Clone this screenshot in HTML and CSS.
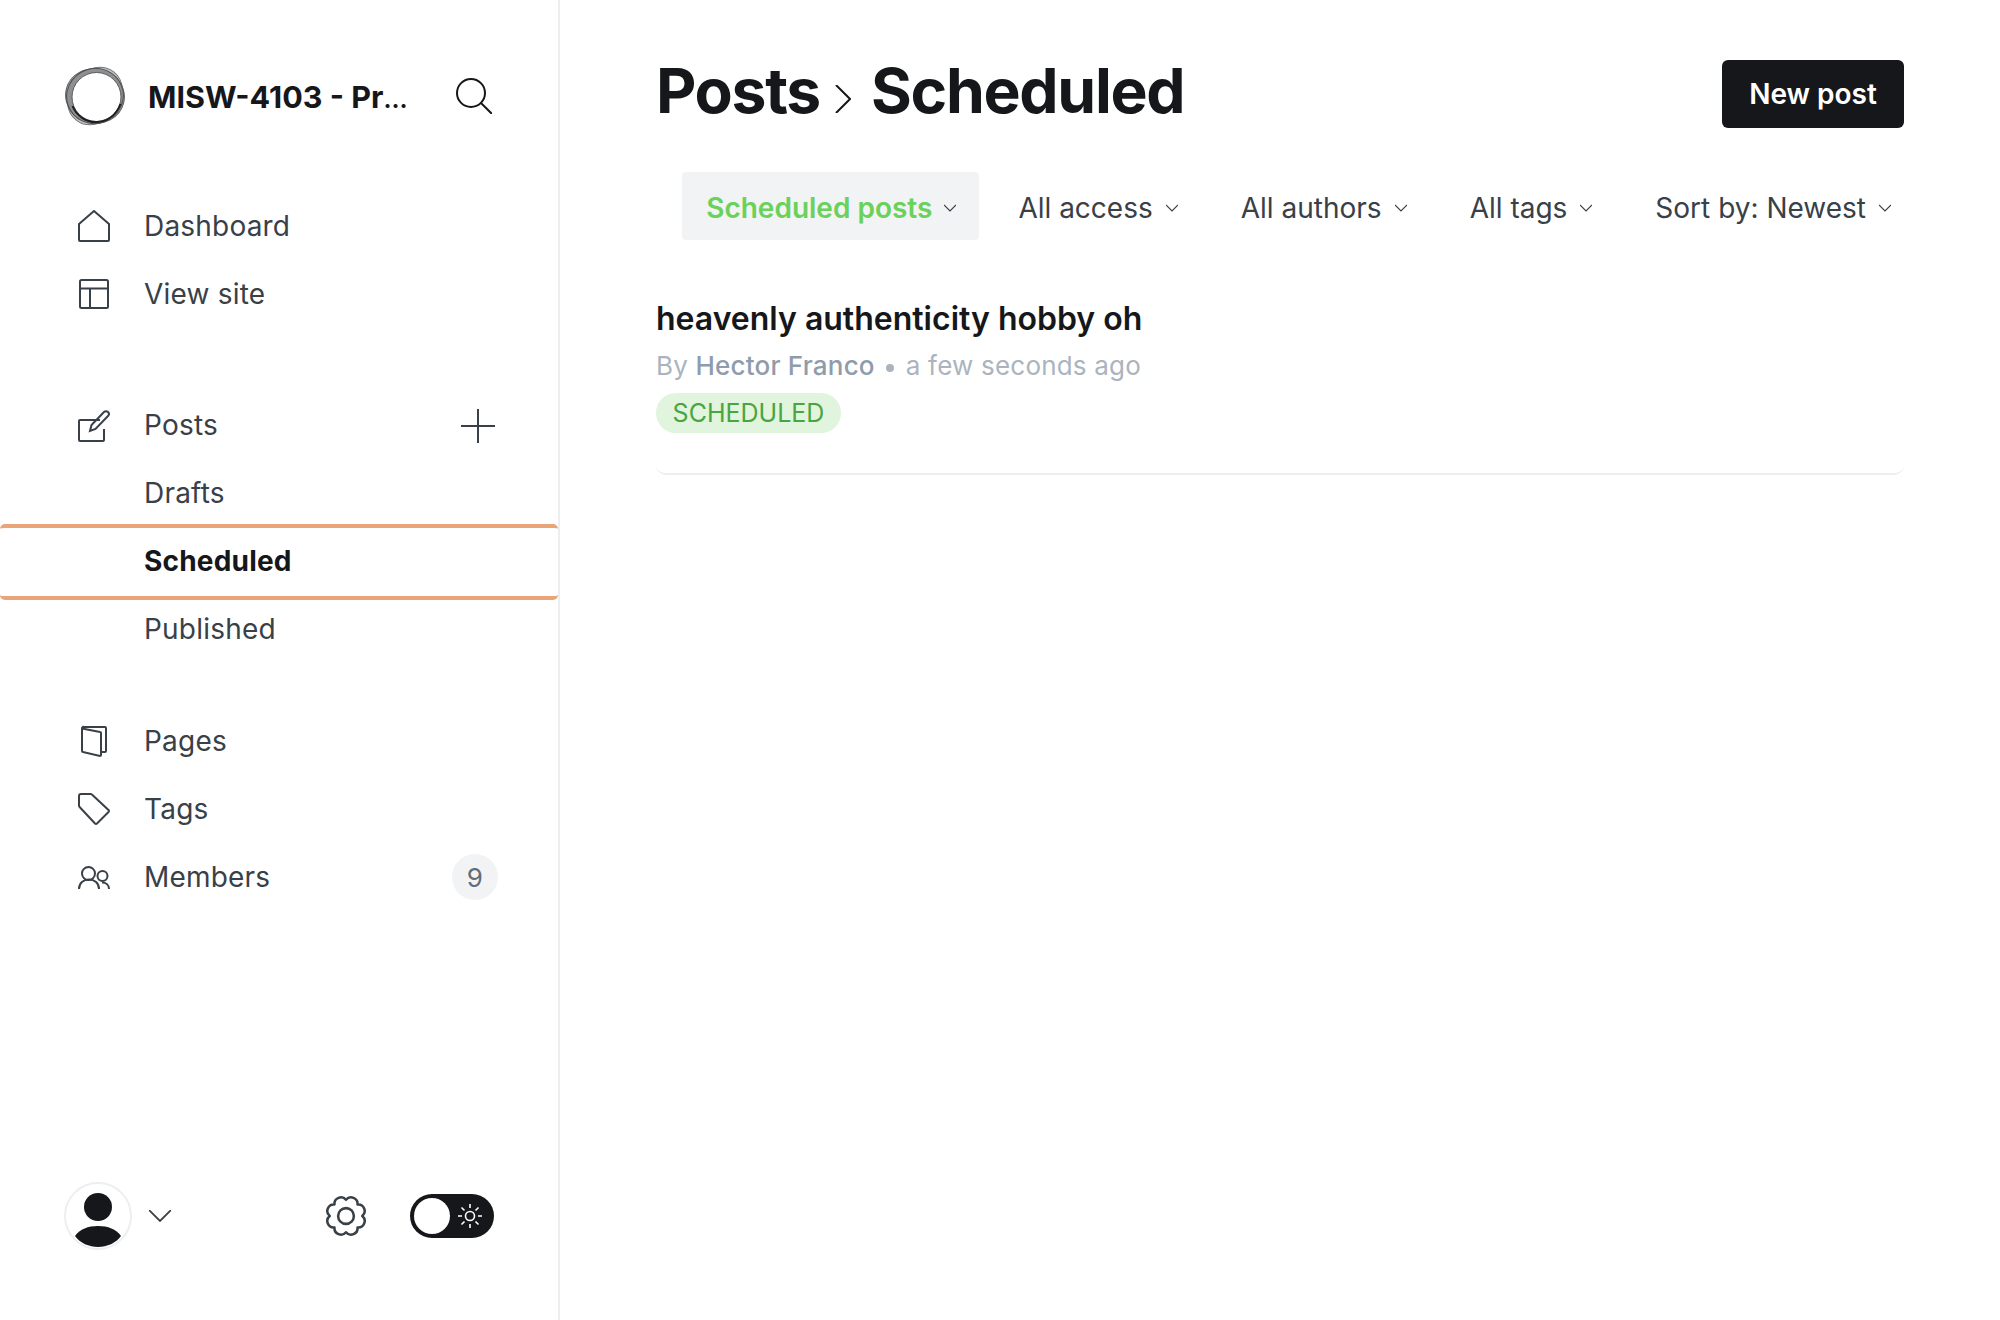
FILE: index.html
```html
<!DOCTYPE html>
<html lang="en">
<head>
    <meta charset="UTF-8">
    <meta name="viewport" content="width=device-width, initial-scale=1.0">
    <title>Posts - Scheduled</title>
    <link rel="stylesheet" href="styles.css">
</head>
<body>
    <aside class="sidebar">
        <div class="site-head">
            <svg class="site-logo" viewBox="0 0 62 62">
                <ellipse cx="31" cy="31" rx="30.500" ry="25.500" transform="rotate(-52 31 31)" fill="#c4c4c4" stroke="#77787a" stroke-width="1"/>
                <ellipse cx="31" cy="31" rx="29.500" ry="27" transform="rotate(14 31 31)" fill="#aaabac" stroke="#5d5e60" stroke-width="1"/>
                <ellipse cx="31" cy="31" rx="28.500" ry="27.500" transform="rotate(-20 31 31)" fill="#8e8f91" stroke="#4d4e50" stroke-width="1"/>
                <circle cx="32.500" cy="32" r="24.500" fill="#ffffff" stroke="#5a5b5d" stroke-width="1"/>
                <path d="M8.500 41c4 10 14 17 25 16 11-1 19-8 23-18" fill="none" stroke="#1d1e20" stroke-width="2"/>
            </svg>
            <span class="site-name">MISW-4103 - Pr<span class="site-dots">…</span></span>
            <svg class="search-icon" viewBox="0 0 36 36" fill="none" stroke="#15171a" stroke-width="2">
                <circle cx="15" cy="15" r="14"/>
                <path d="M25 25l11 11"/>
            </svg>
        </div>

        <nav class="nav-group nav-top">
            <a class="nav-item">
                <svg class="nav-icon" viewBox="0 0 32 32"><path d="M1 14L16 1l15 13v16a1 1 0 0 1-1 1H2a1 1 0 0 1-1-1z"/></svg>
                Dashboard
            </a>
            <a class="nav-item">
                <svg class="nav-icon" viewBox="0 0 32 32"><rect x="2" y="2" width="28" height="28" rx="1.500"/><path d="M2 10.500h28M12 10.500V30"/></svg>
                View site
            </a>
        </nav>

        <nav class="nav-group nav-posts">
            <a class="nav-item">
                <svg class="nav-icon" viewBox="0 0 32 32"><path d="M22 10H2a1 1 0 0 0-1 1v19a1 1 0 0 0 1 1h23a1 1 0 0 0 1-1V19"/><path d="M12 21l1.500-6L26 2a2.800 2.800 0 0 1 4 4L17.500 19z"/></svg>
                Posts
                <svg class="plus-icon" viewBox="0 0 34 34"><path d="M17 0v34M0 17h34"/></svg>
            </a>
            <a class="nav-item">Drafts</a>
            <a class="nav-item nav-current">Scheduled</a>
            <a class="nav-item">Published</a>
        </nav>

        <nav class="nav-group nav-pages">
            <a class="nav-item">
                <svg class="nav-icon" viewBox="0 0 32 32"><path d="M5 4a1 1 0 0 1 1-2h21a1 1 0 0 1 1 1v23a1 1 0 0 1-1 1h-4"/><path d="M4 3.500l18 3.500a1 1 0 0 1 1 1v22a1 1 0 0 1-1 1L5 27a1 1 0 0 1-1-1z"/></svg>
                Pages
            </a>
            <a class="nav-item">
                <svg class="nav-icon" viewBox="0 0 32 32"><path d="M1 3a2 2 0 0 1 2-2h9.500a2 2 0 0 1 1.400.6L30.500 17a1.500 1.500 0 0 1 0 2L19 30.500a1.500 1.500 0 0 1-2 0L1.600 14a2 2 0 0 1-.6-1.400z"/></svg>
                Tags
            </a>
            <a class="nav-item">
                <svg class="nav-icon" viewBox="0 0 32 32"><circle cx="10.500" cy="12.500" r="6.500"/><path d="M1 28c0-6 4.500-9.500 10-9.500s10 3.500 10 9.500"/><circle cx="24.500" cy="15" r="5"/><path d="M24 21.500c4 0 7 2.500 7 6.500"/></svg>
                Members
                <span class="count">9</span>
            </a>
        </nav>

        <div class="side-foot">
            <div class="avatar">
                <svg viewBox="0 0 64 64">
                    <circle cx="32" cy="23" r="14"/>
                    <path d="M9 52c5-7 13-10 23-10s18 3 23 10c-5 7-14 11-23 11S14 59 9 52z"/>
                </svg>
            </div>
            <svg class="avatar-caret" viewBox="0 0 22 12"><path d="M0 0l11 11L22 0"/></svg>
            <svg class="gear-icon" viewBox="0 0 40 40">
                <circle cx="20" cy="20" r="7.500"/>
                <path d="M20 4.500A6.200 6.200 0 0 1 30.960 9.040A6.200 6.200 0 0 1 35.500 20A6.200 6.200 0 0 1 30.960 30.960A6.200 6.200 0 0 1 20 35.500A6.200 6.200 0 0 1 9.040 30.960A6.200 6.200 0 0 1 4.500 20A6.200 6.200 0 0 1 9.040 9.040A6.200 6.200 0 0 1 20 4.500z"/>
            </svg>
            <div class="theme-toggle">
                <span class="knob"></span>
                <svg class="sun-icon" viewBox="0 0 24 24">
                    <circle cx="12" cy="12" r="4.500"/>
                    <path d="M12 0v4M12 20v4M0 12h4M20 12h4M3.500 3.500l3 3M17.500 17.500l3 3M3.500 20.500l3-3M17.500 6.500l3-3"/>
                </svg>
            </div>
        </div>
    </aside>

    <main class="content">
        <header class="page-head">
            <h2 class="page-title">
                Posts
                <svg class="crumb" viewBox="0 0 16 28"><path d="M1 0l14 14L1 28"/></svg>
                Scheduled
            </h2>
            <button class="new-post" type="button">New post</button>
        </header>

        <div class="filters">
            <div class="filter filter-active">Scheduled posts <svg class="caret" viewBox="0 0 12 8"><path d="M0 1l6 6 6-6"/></svg></div>
            <div class="filter">All access <svg class="caret" viewBox="0 0 12 8"><path d="M0 1l6 6 6-6"/></svg></div>
            <div class="filter">All authors <svg class="caret" viewBox="0 0 12 8"><path d="M0 1l6 6 6-6"/></svg></div>
            <div class="filter">All tags <svg class="caret" viewBox="0 0 12 8"><path d="M0 1l6 6 6-6"/></svg></div>
            <div class="filter">Sort by: Newest <svg class="caret" viewBox="0 0 12 8"><path d="M0 1l6 6 6-6"/></svg></div>
        </div>

        <article class="post-row">
            <h3 class="post-title">heavenly authenticity hobby oh</h3>
            <p class="post-meta">By <span class="post-author">Hector Franco</span> <span class="post-dot"></span> a few seconds ago</p>
            <span class="post-status">SCHEDULED</span>
        </article>
    </main>
</body>
</html>
```

FILE: styles.css
```css
* {
    box-sizing: border-box;
}

body {
    margin: 0;
    height: 100vh;
    display: flex;
    background-color: #ffffff;
    font-family: Inter, 'Noto Sans', sans-serif;
    color: #15171a;
    overflow: hidden;
}

svg {
    display: block;
    flex: none;
}

.sidebar {
    width: 560px;
    height: 100%;
    flex: none;
    display: flex;
    flex-direction: column;
    border-right: 2px solid #eceef0;
}

.site-head {
    display: flex;
    align-items: center;
    height: 64px;
    margin-top: 64px;
    padding-left: 64px;
}

.site-logo {
    width: 62px;
    height: 62px;
}

.site-name {
    margin-left: 22px;
    width: 308px;
    font-size: 30.500px;
    font-weight: 700;
    white-space: nowrap;
}

.site-dots {
    font-size: 24px;
}

.search-icon {
    width: 36px;
    height: 36px;
}

.nav-top {
    margin-top: 64px;
}

.nav-posts {
    margin-top: 64px;
}

.nav-pages {
    margin-top: 43px;
}

.nav-item {
    display: flex;
    align-items: center;
    height: 68px;
    padding-left: 144px;
    position: relative;
    font-size: 28px;
    color: #394047;
    letter-spacing: 0.2px;
}

.nav-posts .nav-item {
    padding-bottom: 2px;
}

.nav-icon {
    position: absolute;
    left: 78px;
    top: 18px;
    width: 32px;
    height: 32px;
    fill: none;
    stroke: #394047;
    stroke-width: 2;
}

.nav-current {
    height: 76px;
    margin: -4px 0;
    border-top: 4px solid #e9a578;
    border-bottom: 4px solid #e9a578;
    border-radius: 5px;
    font-weight: 700;
    color: #15171a;
    letter-spacing: 0.2px;
}

.plus-icon {
    position: absolute;
    left: 461px;
    top: 17px;
    width: 34px;
    height: 34px;
    fill: none;
    stroke: #394047;
    stroke-width: 2;
}

.count {
    position: absolute;
    left: 452px;
    top: 11px;
    width: 46px;
    height: 46px;
    border-radius: 50%;
    background-color: #f1f3f4;
    display: flex;
    align-items: center;
    justify-content: center;
    font-size: 26px;
    color: #626d79;
}

.side-foot {
    margin-top: auto;
    margin-bottom: 70px;
    padding-left: 64px;
    display: flex;
    align-items: center;
    height: 68px;
}

.avatar {
    width: 68px;
    height: 68px;
    border: 2px solid #eceef0;
    border-radius: 50%;
    overflow: hidden;
}

.avatar svg {
    width: 64px;
    height: 64px;
    fill: #15171a;
}

.avatar-caret {
    margin-left: 17px;
    width: 22px;
    height: 12px;
    fill: none;
    stroke: #394047;
    stroke-width: 1.8;
}

.gear-icon {
    margin-left: 154px;
    width: 42px;
    height: 42px;
    fill: none;
    stroke: #394047;
    stroke-width: 2.4;
    stroke-linejoin: round;
}

.theme-toggle {
    margin-left: 43px;
    width: 84px;
    height: 44px;
    border-radius: 22px;
    background-color: #15171a;
    display: flex;
    align-items: center;
    padding-left: 4px;
}

.knob {
    width: 36px;
    height: 36px;
    border-radius: 50%;
    background-color: #ffffff;
}

.sun-icon {
    margin-left: 8px;
    width: 24px;
    height: 24px;
    fill: none;
    stroke: #ffffff;
    stroke-width: 1.6;
}

.content {
    flex: 1;
    min-width: 0;
    padding: 60px 96px 0;
}

.page-head {
    display: flex;
    align-items: center;
    justify-content: space-between;
    height: 68px;
}

.page-title {
    margin: 0;
    padding-bottom: 8px;
    display: flex;
    align-items: center;
    font-size: 62.400px;
    font-weight: 700;
    letter-spacing: -1.3px;
    color: #15171a;
}

.crumb {
    width: 16px;
    height: 28px;
    margin: 18px 20px 0 15px;
    fill: none;
    stroke: #15171a;
    stroke-width: 2;
}

.new-post {
    width: 182px;
    height: 68px;
    border: none;
    border-radius: 6px;
    background-color: #15171a;
    color: #ffffff;
    font-family: inherit;
    font-size: 28px;
    font-weight: 600;
    cursor: pointer;
}

.filters {
    display: flex;
    justify-content: flex-end;
    margin-top: 44px;
    height: 68px;
}

.filter {
    display: flex;
    align-items: center;
    gap: 13px;
    padding: 3px 13px 0 16px;
    margin-left: 34px;
    font-size: 28px;
    color: #394047;
    white-space: nowrap;
}

.filter-active {
    gap: 12px;
    margin-left: 0;
    padding: 3px 23px 0 24px;
    border-radius: 4px;
    background-color: #f1f3f4;
    color: #6ad15b;
    font-weight: 600;
}

.filter-active + .filter {
    margin-left: 23px;
}

.caret {
    width: 12px;
    height: 8px;
    fill: none;
    stroke: #394047;
    stroke-width: 1.2;
}

.post-row {
    margin-top: 56px;
    height: 179px;
    border-bottom: 2px solid #eceef0;
    border-radius: 0 0 10px 10px;
}

.post-title {
    margin: 0;
    height: 46px;
    line-height: 46px;
    font-size: 32px;
    font-weight: 600;
    color: #15171a;
}

.post-meta {
    margin: 0;
    height: 51px;
    line-height: 48px;
    font-size: 26px;
    color: #abb4be;
    letter-spacing: 0.2px;
}

.post-author {
    color: #8e9cac;
    font-weight: 500;
}

.post-dot {
    display: inline-block;
    width: 8px;
    height: 8px;
    margin: 0 4px;
    border-radius: 50%;
    background-color: #abb4be;
    vertical-align: 3px;
}

.post-status {
    display: block;
    width: 185px;
    height: 40px;
    line-height: 40px;
    border-radius: 20px;
    background-color: #e1f4de;
    color: #4aa541;
    font-size: 25px;
    font-weight: 400;
    text-align: center;
}
```
